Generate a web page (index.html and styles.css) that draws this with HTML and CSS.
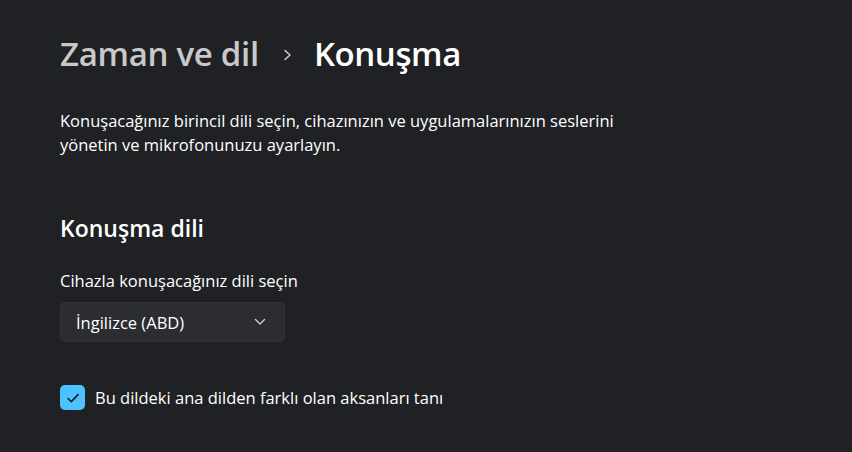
FILE: index.html
```html
<!DOCTYPE html>
<html lang="tr">
<head>
<meta charset="utf-8">
<link rel="stylesheet" href="styles.css">
</head>
<body>
<main class="page">
  <header class="breadcrumb">
    <span class="crumb-parent">Zaman ve dil</span>
    <svg class="crumb-sep" width="12" height="14" viewBox="0 0 12 14"><path d="M3 2.5 L8 7 L3 11.5" fill="none" stroke="#c9c9c9" stroke-width="1.6" stroke-linecap="round" stroke-linejoin="round"/></svg>
    <span class="crumb-current">Konuşma</span>
  </header>
  <p class="description">Konuşacağınız birincil dili seçin, cihazınızın ve uygulamalarınızın seslerini<br>yönetin ve mikrofonunuzu ayarlayın.</p>
  <h2 class="section-title">Konuşma dili</h2>
  <label class="field-label">Cihazla konuşacağınız dili seçin</label>
  <div class="dropdown">
    <span class="dropdown-value">İngilizce (ABD)</span>
    <svg class="dropdown-chevron" width="12" height="8" viewBox="0 0 12 8"><path d="M1.5 1.5 L6 6 L10.5 1.5" fill="none" stroke="#d0d0d0" stroke-width="1.3" stroke-linecap="round" stroke-linejoin="round"/></svg>
  </div>
  <div class="checkbox-row">
    <span class="checkbox">
      <svg width="14" height="12" viewBox="0 0 14 12"><path d="M2 6.5 L5.3 9.6 L12 2.6" fill="none" stroke="#0f1a22" stroke-width="1.6" stroke-linecap="round" stroke-linejoin="round"/></svg>
    </span>
    <span class="checkbox-label">Bu dildeki ana dilden farklı olan aksanları tanı</span>
  </div>
</main>
</body>
</html>
```
FILE: styles.css
```css
html, body {
  margin: 0;
  padding: 0;
  background: #1f2125;
  height: 100%;
}
body {
  font-family: "Open Sans", "Noto Sans", sans-serif;
  color: #ffffff;
}
.page {
  padding: 27px 0 0 60px;
}
.breadcrumb {
  display: flex;
  align-items: center;
  height: 52px;
}
.crumb-parent {
  font-size: 33px;
  font-weight: 600;
  color: #c9c9c9;
  letter-spacing: -0.3px;
}
.crumb-sep {
  margin: 4px 20px 0 23px;
}
.crumb-current {
  font-size: 33px;
  font-weight: 600;
  color: #ffffff;
  letter-spacing: -0.4px;
}
.description {
  margin: 30px 0 0;
  font-size: 16.5px;
  line-height: 24px;
}
.section-title {
  margin: 55px 0 0;
  font-size: 23px;
  font-weight: 600;
  line-height: 32px;
}
.field-label {
  display: block;
  margin-top: 25px;
  font-size: 16.5px;
  line-height: 24px;
}
.dropdown {
  margin-top: 9px;
  width: 225px;
  height: 40px;
  box-sizing: border-box;
  background: #2b2d31;
  border: 1px solid #303236;
  border-radius: 5px;
  display: flex;
  align-items: center;
  justify-content: space-between;
  padding: 0 18px 0 15px;
}
.dropdown-value {
  font-size: 16.5px;
}
.checkbox-row {
  margin-top: 43px;
  display: flex;
  align-items: center;
  gap: 10px;
}
.checkbox {
  width: 25px;
  height: 25px;
  border-radius: 5px;
  background: #4cc2ff;
  display: flex;
  align-items: center;
  justify-content: center;
}
.checkbox-label {
  font-size: 16.5px;
}
```
